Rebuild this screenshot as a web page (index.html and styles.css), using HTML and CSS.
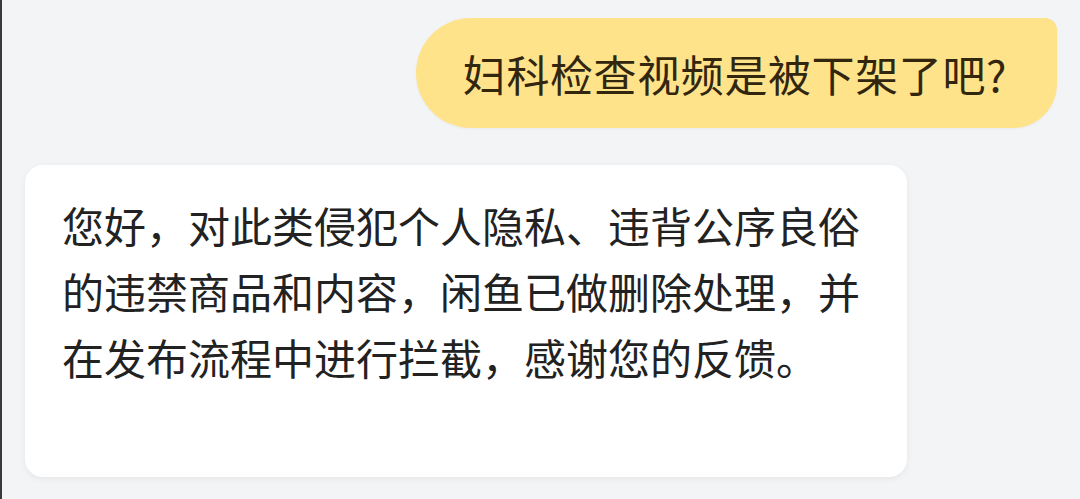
FILE: index.html
```html
<!DOCTYPE html>
<html lang="zh">
<head>
<meta charset="utf-8">
<link rel="stylesheet" href="styles.css">
</head>
<body>
<div class="chat">
  <div class="row right">
    <div class="bubble question">妇科检查视频是被下架了吧?</div>
  </div>
  <div class="row left">
    <div class="bubble answer">您好，对此类侵犯个人隐私、违背公序良俗的违禁商品和内容，闲鱼已做删除处理，并在发布流程中进行拦截，感谢您的反馈。</div>
  </div>
</div>
</body>
</html>
```
FILE: styles.css
```css
html, body {
  margin: 0;
  padding: 0;
  width: 1080px;
  height: 499px;
  overflow: hidden;
}
body {
  background: #f3f4f6;
  font-family: "Noto Sans CJK SC", "Noto Sans", sans-serif;
  border-left: 2px solid #3a3a3a;
  box-sizing: border-box;
}
.chat {
  display: flex;
  flex-direction: column;
  padding: 18px 23px 0 23px;
  gap: 37px;
}
.row {
  display: flex;
}
.row.right {
  justify-content: flex-end;
}
.bubble.question {
  height: 110px;
  box-sizing: border-box;
  padding: 0 50px 0 47px;
  display: flex;
  align-items: center;
  background: #fee38b;
  color: #33260f;
  font-size: 43px;
  letter-spacing: 0.6px;
  border-radius: 55px 12px 44px 55px;
  box-shadow: 0 1px 3px rgba(0,0,0,0.04);
}
.bubble.answer {
  width: 882px;
  height: 312px;
  box-sizing: border-box;
  padding: 27px 40px 0 37px;
  background: #ffffff;
  color: #222222;
  font-size: 42px;
  line-height: 66px;
  border-radius: 18px;
  box-shadow: 0 2px 6px rgba(0,0,0,0.06);
}
```
